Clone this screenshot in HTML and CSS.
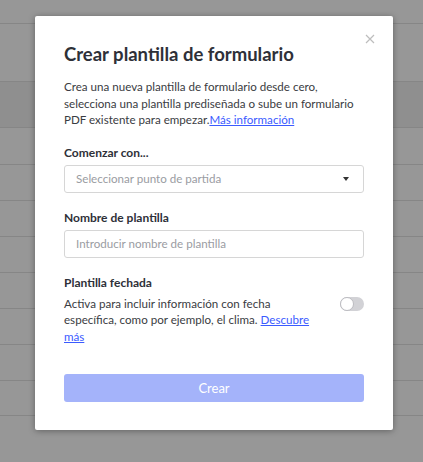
FILE: index.html
```html
<!DOCTYPE html>
<html lang="es">
<head>
<meta charset="utf-8">
<link rel="stylesheet" href="styles.css">
</head>
<body>
<div class="backdrop">
  <div class="row r1"></div>
  <div class="row r2"></div>
  <div class="row r3"></div>
  <div class="row r4"></div>
  <div class="row"></div>
  <div class="row"></div>
  <div class="row"></div>
  <div class="row"></div>
  <div class="row"></div>
  <div class="row"></div>
  <div class="row r-last"></div>
</div>
<div class="modal">
  <button class="close" aria-label="Cerrar">
    <svg width="10" height="10" viewBox="0 0 10 10"><path d="M1 1L9 9M9 1L1 9" stroke="#bdbdbd" stroke-width="1.2" fill="none"/></svg>
  </button>
  <h1 class="title">Crear plantilla de formulario</h1>
  <p class="intro">Crea una nueva plantilla de formulario desde cero, selecciona una plantilla prediseñada o sube un formulario PDF existente para empezar.<a href="#">Más información</a></p>

  <div class="field first">
    <label class="label">Comenzar con...</label>
    <div class="select">
      <span class="placeholder">Seleccionar punto de partida</span>
      <span class="caret"></span>
    </div>
  </div>

  <div class="field">
    <label class="label">Nombre de plantilla</label>
    <div class="input"><span class="placeholder">Introducir nombre de plantilla</span></div>
  </div>

  <div class="field dated">
    <label class="label">Plantilla fechada</label>
    <div class="dated-row">
      <p class="dated-text">Activa para incluir información con fecha específica, como por ejemplo, el clima. <a href="#">Descubre más</a></p>
      <span class="toggle"><span class="knob"></span></span>
    </div>
  </div>

  <button class="create">Crear</button>
</div>
</body>
</html>
```

FILE: styles.css
```css
* { box-sizing: border-box; }
html, body { margin: 0; padding: 0; }
body {
  width: 423px;
  height: 462px;
  overflow: hidden;
  background: #979797;
  font-family: Lato, "Open Sans", sans-serif;
  position: relative;
}
.backdrop { display: flex; flex-direction: column; }
.row { height: 36px; border-bottom: 1px solid #868686; }
.r1 { height: 24px; }
.r2 { height: 58px; }
.r3 { height: 46px; background: #8f8f8f; }
.r4 { height: 37px; }
.r-last { height: 35px; }

.modal {
  position: absolute;
  left: 35px;
  top: 16px;
  width: 358px;
  height: 414px;
  background: #fff;
  border-radius: 2px;
  box-shadow: 0 1px 6px rgba(0,0,0,0.35);
  padding: 26px 29px 0 29px;
  color: #3a3c42;
}
.close {
  position: absolute;
  top: 18px;
  right: 18px;
  width: 10px;
  height: 10px;
  padding: 0;
  border: 0;
  background: none;
  display: flex;
}
.title {
  margin: 0;
  font-size: 18.5px;
  font-weight: 700;
  line-height: 24px;
  color: #2e3038;
}
.intro {
  margin: 13px 0 0;
  font-size: 11.6px;
  line-height: 16.5px;
  color: #3a3c42;
}
a { color: #3b5bff; text-decoration: underline; }

.field { margin-top: 17px; }
.field.first { margin-top: 16px; }
.label {
  display: block;
  font-size: 12px;
  font-weight: 700;
  line-height: 15px;
  color: #2e3038;
  margin-bottom: 5px;
}
.select, .input {
  height: 28px;
  border: 1px solid #d6d6d6;
  border-radius: 3px;
  display: flex;
  align-items: center;
  justify-content: space-between;
  padding: 0 11px;
}
.placeholder { font-size: 11.6px; color: #9a9ca2; }
.caret {
  width: 0; height: 0;
  border-left: 3.5px solid transparent;
  border-right: 3.5px solid transparent;
  border-top: 4px solid #333;
  margin-right: 3px;
}
.dated { margin-top: 17px; }
.dated .label { margin-bottom: 6px; }
.dated-row {
  display: flex;
  justify-content: space-between;
  align-items: flex-start;
}
.dated-text {
  margin: 0;
  flex: none;
  width: 258px;
  font-size: 11.6px;
  line-height: 16.5px;
}
.toggle {
  width: 24px;
  height: 14px;
  border-radius: 7px;
  background: #d2d2d6;
  position: relative;
  margin-top: 1px;
  flex: none;
}
.knob {
  position: absolute;
  left: 0; top: 0;
  width: 14px; height: 14px;
  border-radius: 50%;
  background: #fff;
  border: 1px solid #bbbbc0;
}
.create {
  display: block;
  width: 100%;
  height: 28px;
  margin-top: 29px;
  border: 0;
  border-radius: 3px;
  background: #a4b3fa;
  color: #fff;
  font-family: Lato, sans-serif;
  font-size: 13px;
}
```
